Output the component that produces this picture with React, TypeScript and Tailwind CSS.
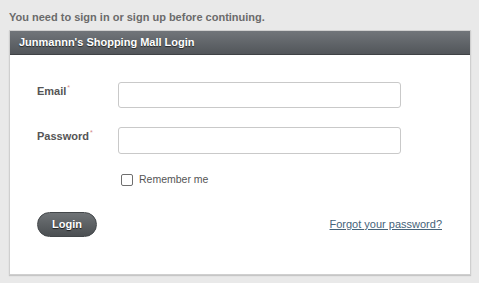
import React from 'react';

export default function App() {
  return (
    <div className="min-h-[283px] w-[479px] bg-[#e9e9e9] px-[9px] pt-[10px] font-['Liberation_Sans',Arial,sans-serif]">
      <p className="h-[20px] text-[11px] leading-[14px] font-bold text-[#6b6b6b]">
        You need to sign in or sign up before continuing.
      </p>

      <div className="w-[462px] border border-[#cfcfcf] bg-white shadow-[0_1px_1px_rgba(0,0,0,0.15)]">
        <div className="flex h-[24px] items-center border-b border-[#3f4245] bg-gradient-to-b from-[#71757a] to-[#52565a] pl-[9px]">
          <h1 className="text-[11px] font-bold text-white [text-shadow:0_1px_1px_rgba(0,0,0,0.6)]">
            Junmannn's Shopping Mall Login
          </h1>
        </div>

        <form className="px-[27px] pt-[27px] pb-[37px]" onSubmit={(e) => e.preventDefault()}>
          <div className="flex items-start">
            <label className="w-[81px] pt-[1px] text-[11px] font-bold text-[#555]">
              Email<abbr className="ml-[1px] align-super text-[7px] font-normal text-[#d48a8a] no-underline">*</abbr>
            </label>
            <input
              type="email"
              className="h-[26px] w-[283px] rounded-[3px] border border-[#c9c9c9] bg-white px-2 text-[11px] outline-none"
            />
          </div>

          <div className="mt-[19px] flex items-start">
            <label className="w-[81px] pt-[1px] text-[11px] font-bold text-[#555]">
              Password<abbr className="ml-[1px] align-super text-[7px] font-normal text-[#d48a8a] no-underline">*</abbr>
            </label>
            <input
              type="password"
              className="h-[27px] w-[283px] rounded-[3px] border border-[#c9c9c9] bg-white px-2 text-[11px] outline-none"
            />
          </div>

          <div className="mt-[18px] ml-[84px] flex items-center">
            <span className="h-[12px] w-[12px] rounded-[2px] border border-[#6f6f6f] bg-white" />
            <span className="ml-[6px] text-[10.5px] text-[#555]">Remember me</span>
          </div>

          <div className="mt-[24px] flex items-center justify-between">
            <button
              type="submit"
              className="h-[25px] w-[60px] rounded-full border border-[#43474a] bg-gradient-to-b from-[#6f7376] to-[#4b4f52] text-[11px] font-bold text-white [text-shadow:0_1px_1px_rgba(0,0,0,0.7)]"
            >
              Login
            </button>
            <a href="#" className="mr-[1px] text-[11px] text-[#46637a] underline">
              Forgot your password?
            </a>
          </div>
        </form>
      </div>
    </div>
  );
}
